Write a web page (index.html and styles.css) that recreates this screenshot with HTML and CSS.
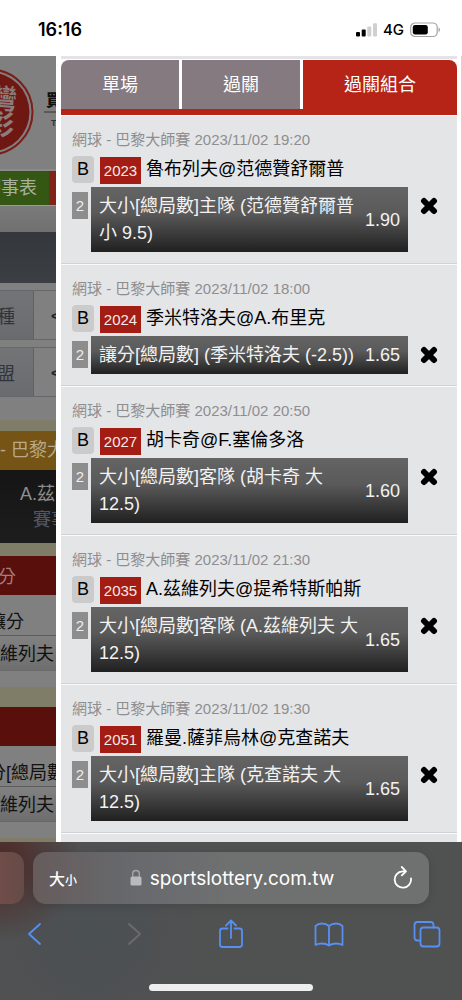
FILE: index.html
```html
<!DOCTYPE html>
<html lang="zh-Hant">
<head>
<meta charset="utf-8">
<meta name="viewport" content="width=device-width, initial-scale=1">
<title>過關組合</title>
<link rel="stylesheet" href="styles.css">
</head>
<body>
<div class="phone">
  <header class="status">
    <span class="time">16:16</span>
    <div class="signals">
      <svg class="bars" width="21" height="14" viewBox="0 0 21 14" aria-hidden="true">
        <rect x="0" y="9" width="4" height="4.5" rx="1"/><rect x="5.7" y="6.5" width="4" height="7" rx="1"/>
        <rect x="11.300" y="3.500" width="4" height="10" rx="1" fill="#d0d0d0"/><rect x="17" y="0.300" width="4" height="13.200" rx="1" fill="#d0d0d0"/>
      </svg>
      <span class="network">4G</span>
      <svg width="31" height="16" viewBox="0 0 31 16" aria-hidden="true">
        <rect x="0.700" y="1" width="26.500" height="13.500" rx="4.300" fill="none" stroke="#a4a4a4" stroke-width="1.200"/>
        <rect x="2.800" y="3" width="15" height="9.600" rx="2.300"/>
        <path d="M28.500 5.500v4.500q1.500-.6 1.500-2.250t-1.500-2.250z" fill="#a4a4a4"/>
      </svg>
    </div>
  </header>

  <main class="view">
    <div class="site">
      <div class="brand">
        <svg width="56" height="112" viewBox="0 0 56 112" role="img" aria-label="台灣運彩">
          <circle cx="-10" cy="56" r="42.500" fill="none" stroke="#7b1d18" stroke-width="2"/>
          <circle cx="-10" cy="56" r="39.500" fill="#6f1813"/>
          <g class="seal" transform="rotate(4 5 56)"><text x="-12" y="53">灣</text><text x="-13" y="79">彩</text></g>
          <text class="slogan" x="46" y="50">買</text>
          <path d="M44 56h12" stroke="#333"/>
          <text class="tag" x="51" y="70">T</text>
        </svg>
      </div>
      <nav class="menu"><a class="menu-green" href="#">賽事表</a><a class="menu-red" href="#" aria-label="投注"></a></nav>
      <div class="shade"></div>
      <div class="slate"></div>
      <div class="filter"><span>球種</span><button>&lt;</button></div>
      <div class="filter"><span>聯盟</span><button>&lt;</button></div>
      <div class="league">- 巴黎大</div>
      <div class="match"><span>A.茲</span><span class="info">賽事</span></div>
      <div class="market">讓分</div>
      <div class="option">讓分</div>
      <div class="player">維列夫</div>
      <div class="market market-next"></div>
      <div class="option option-wide">分[總局數]</div>
      <div class="player">維列夫</div>
      <div class="site-end"></div>
    </div>

    <section class="slip">
      <div class="slip-edge"></div>
      <div class="tabs" role="tablist">
        <button role="tab">單場</button>
        <button role="tab">過關</button>
        <button role="tab" class="active" aria-selected="true">過關組合</button>
      </div>
      <article class="bet">
        <p class="event">網球 - 巴黎大師賽 2023/11/02 19:20</p>
        <div class="teams"><span class="bank">B</span><span class="code">2023</span><span class="names">魯布列夫@范德贊舒爾普</span></div>
        <div class="pick"><span class="legs">2</span><div class="choice"><span class="label">大小[總局數]主隊 (范德贊舒爾普<br>小 9.5)</span><span class="odds">1.90</span></div>
        <button class="remove" aria-label="刪除"><svg width="18" height="18" viewBox="0 0 18 18"><path d="M4 4l10 10M14 4L4 14"/></svg></button></div>
      </article>
      <article class="bet">
        <p class="event">網球 - 巴黎大師賽 2023/11/02 18:00</p>
        <div class="teams"><span class="bank">B</span><span class="code">2024</span><span class="names">季米特洛夫@A.布里克</span></div>
        <div class="pick"><span class="legs">2</span><div class="choice"><span class="label">讓分[總局數] (季米特洛夫 (-2.5))</span><span class="odds">1.65</span></div>
        <button class="remove" aria-label="刪除"><svg width="18" height="18" viewBox="0 0 18 18"><path d="M4 4l10 10M14 4L4 14"/></svg></button></div>
      </article>
      <article class="bet">
        <p class="event">網球 - 巴黎大師賽 2023/11/02 20:50</p>
        <div class="teams"><span class="bank">B</span><span class="code">2027</span><span class="names">胡卡奇@F.塞倫多洛</span></div>
        <div class="pick"><span class="legs">2</span><div class="choice"><span class="label">大小[總局數]客隊 (胡卡奇 大<br>12.5)</span><span class="odds">1.60</span></div>
        <button class="remove" aria-label="刪除"><svg width="18" height="18" viewBox="0 0 18 18"><path d="M4 4l10 10M14 4L4 14"/></svg></button></div>
      </article>
      <article class="bet">
        <p class="event">網球 - 巴黎大師賽 2023/11/02 21:30</p>
        <div class="teams"><span class="bank">B</span><span class="code">2035</span><span class="names">A.茲維列夫@提希特斯帕斯</span></div>
        <div class="pick"><span class="legs">2</span><div class="choice"><span class="label">大小[總局數]客隊 (A.茲維列夫 大<br>12.5)</span><span class="odds">1.65</span></div>
        <button class="remove" aria-label="刪除"><svg width="18" height="18" viewBox="0 0 18 18"><path d="M4 4l10 10M14 4L4 14"/></svg></button></div>
      </article>
      <article class="bet">
        <p class="event">網球 - 巴黎大師賽 2023/11/02 19:30</p>
        <div class="teams"><span class="bank">B</span><span class="code">2051</span><span class="names">羅曼.薩菲烏林@克查諾夫</span></div>
        <div class="pick"><span class="legs">2</span><div class="choice"><span class="label">大小[總局數]主隊 (克查諾夫 大<br>12.5)</span><span class="odds">1.65</span></div>
        <button class="remove" aria-label="刪除"><svg width="18" height="18" viewBox="0 0 18 18"><path d="M4 4l10 10M14 4L4 14"/></svg></button></div>
      </article>
      <div class="slip-more"></div>
    </section>
  </main>

  <footer class="safari">
    <div class="address-row">
      <div class="prev-tab"></div>
      <div class="address">
        <button class="text-size" aria-label="文字大小">大<small>小</small></button>
        <button class="url">
          <svg width="12" height="18" viewBox="0 0 12 18" aria-hidden="true"><rect x="0.500" y="7.500" width="11" height="9" rx="1.500" fill="#b9b9be"/><path d="M2.700 8V5q0-3.500 3.300-3.500T9.300 5v3" fill="none" stroke="#a5a5aa" stroke-width="1.400"/></svg>
          sportslottery.com.tw
        </button>
        <button class="reload" aria-label="重新載入"><svg width="20" height="24" viewBox="0 0 20 24"><path d="M18 12.500A8.200 8.200 0 1 1 9.500 5.300H13M8.800 1L13 5.300L8.800 9.400"/></svg></button>
      </div>
    </div>
    <nav class="tools">
      <button aria-label="返回"><svg width="30" height="32" viewBox="0 0 30 32"><path d="M20 6L9 16L20 26"/></svg></button>
      <button aria-label="前進" disabled><svg width="30" height="32" viewBox="0 0 30 32"><path d="M11 6L22 16L11 26"/></svg></button>
      <button aria-label="分享"><svg width="30" height="32" viewBox="0 0 30 32"><path d="M11.500 10.500H6.500q-2.500 0-2.500 2.500V26.500q0 2.500 2.500 2.500h17q2.500 0 2.500-2.500V13q0-2.500-2.500-2.500h-5M15 20V2.500M10 7.500L15 2.500L20 7.500"/></svg></button>
      <button aria-label="書籤"><svg width="30" height="32" viewBox="0 0 30 32"><path d="M15 8Q12 5.500 8 5.500Q4 5.500 1.500 8V27Q4 25.500 8 25.500Q12 25.500 15 27.500Q18 25.500 22 25.500Q26 25.500 28.500 27V8Q26 5.500 22 5.500Q18 5.500 15 8V27.500"/></svg></button>
      <button aria-label="分頁"><svg width="30" height="32" viewBox="0 0 30 32"><rect x="8.500" y="9.500" width="19" height="19" rx="3"/><path d="M8.500 22.500H5.500q-3 0-3-3V7q0-3 3-3H18.500q3 0 3 3v2.500"/></svg></button>
    </nav>
    <div class="home"></div>
  </footer>
</div>
</body>
</html>
```
FILE: styles.css
```css
* { box-sizing: border-box; }
body {
  margin: 0;
  background: #fff;
  font-family: "Liberation Sans", "Noto Sans CJK TC", sans-serif;
  font-size: 18px;
  color: #000;
}
p { margin: 0; }
button {
  margin: 0;
  padding: 0;
  border: 0;
  background: none;
  color: inherit;
  font: inherit;
}
svg { display: block; flex: none; }
.phone {
  display: flex;
  flex-direction: column;
  min-height: 100vh;
}

.status {
  height: 56px;
  padding: 3px 21px 0 38px;
  display: flex;
  align-items: center;
  justify-content: space-between;
  font-family: Inter, "Liberation Sans", sans-serif;
}
.time { font-weight: 600; }
.signals { display: flex; align-items: center; gap: 6px; }
.network { font-size: 15px; font-weight: 500; }

.view {
  flex: 1 1 0;
  min-height: 0;
  display: grid;
  grid-template-columns: 56px 1fr;
  padding-right: 1px;
  background: #d6d6cf;
  overflow: hidden;
}

.site {
  overflow: hidden;
  background: #808080;
  color: #1c1c1c;
  white-space: nowrap;
}
.seal { font-size: 28px; font-weight: 700; fill: #8a7d7c; }
.slogan { font-size: 16px; font-weight: 900; fill: #111; }
.tag { font-size: 9px; font-weight: 700; fill: #333; }
.brand { height: 115px; border-bottom: 2px solid #8b8b8b; }
.menu { height: 35px; display: flex; border-bottom: 1px solid #999; }
.menu a { color: #a9b09f; text-decoration: none; line-height: 34px; }
.menu-green {
  width: 49px;
  padding-right: 12px;
  display: flex;
  justify-content: flex-end;
  background: #345713;
  overflow: hidden;
}
.menu-red { flex: 1; background: #81231b; }
.shade { height: 26px; background: linear-gradient(#7a7a7a, #707070); }
.slate { height: 51px; margin-bottom: 7px; background: linear-gradient(#34383c, #3b3e43); }
.filter {
  height: 50px;
  margin-bottom: 7px;
  display: flex;
  border: 1px solid #66676b;
  border-width: 1px 0;
  color: #33343a;
}
.filter span {
  width: 34px;
  padding-right: 18px;
  display: flex;
  justify-content: flex-end;
  align-items: center;
  background: linear-gradient(#737476, #696b6f);
  border-right: 1px solid #5f6165;
}
.filter button { flex: 1; padding-left: 17px; text-align: left; font-weight: 700; font-size: 15px; color: #222; }
.league {
  height: 50px;
  margin-top: 23px;
  border-top: 11px solid #7f7c68;
  line-height: 38px;
  background: #755415;
  color: #b8aa8b;
}
.match {
  height: 86px;
  padding: 11px 0 0 20px;
  border-bottom: 13px solid #7f7c68;
  background: linear-gradient(#151515, #1d1d1d);
  color: #8e8e8e;
  line-height: 26px;
}
.match span { display: block; }
.match .info { padding-left: 13px; color: #545865; }
.market {
  height: 39px;
  padding: 0 40px 2px 0;
  display: flex;
  justify-content: flex-end;
  align-items: center;
  background: #590f0b;
  color: #a37e7b;
}
.market-next { height: 59px; margin-top: 16px; border-top: 20px solid #7f7c68; }
.option {
  height: 41px;
  padding: 10px 32px 0 0;
  display: flex;
  justify-content: flex-end;
  align-items: center;
  border-bottom: 1px solid #5c5c5c;
  color: #111;
}
.option-wide { padding-right: 0; justify-content: flex-start; text-indent: -12px; }
.player {
  height: 35px;
  padding: 0 2px 2px 0;
  display: flex;
  justify-content: flex-end;
  align-items: center;
  border-bottom: 1px solid #696969;
  background: linear-gradient(#818181, #6e6e6e);
  color: #111;
}
.site-end { height: 24px; border-bottom: 8px solid #7f7c68; }

.slip {
  min-width: 0;
  border: solid #fff;
  border-width: 0 4px 0 5px;
  background: #fff;
}
.slip-edge { height: 3px; background: #e4e4e6; margin-bottom: 1px; }
.tabs {
  height: 55px;
  display: grid;
  grid-template-columns: 118fr 118fr 154fr;
  gap: 3px;
  border-bottom: 6px solid #b62418;
}
.tabs button { background: #857a80; color: #fff; padding-bottom: 3px; }
.tabs button:first-child { border-radius: 8px 0 0 0; }
.tabs .active { background: #b62418; border-radius: 0 8px 0 0; }
.bet {
  padding: 11px 17px 11px 11px;
  border-top: 1px solid #fafafa;
  border-bottom: 1px solid #d2d2d4;
  background: #e4e5e7;
}
.event { font-size: 15px; line-height: 26px; color: #8e8e90; white-space: nowrap; }
.teams { display: flex; align-items: flex-start; height: 34px; padding-top: 3px; white-space: nowrap; }
.bank {
  width: 22px;
  line-height: 27px;
  border-radius: 4px;
  background: #cbcbcc;
  text-align: center;
}
.code {
  width: 41px;
  margin: 1px 5px 0 6px;
  line-height: 27px;
  background: #a31d14;
  color: #f5e9e7;
  font-size: 15px;
  text-align: center;
}
.names { line-height: 26px; }
.pick { display: flex; align-items: flex-start; }
.legs {
  width: 16px;
  margin: 5px 3px 0 0;
  line-height: 27px;
  background: #8d8d8d;
  color: #eee;
  font-size: 15px;
  text-align: center;
}
.choice {
  flex: 1;
  padding: 6px 8px 5px;
  display: flex;
  align-items: center;
  justify-content: space-between;
  background: linear-gradient(#646464, #5a5a5a 40%, #202020);
  color: #f2f2f2;
  line-height: 27px;
  white-space: nowrap;
}
.remove { width: 18px; height: 18px; margin: 10px 2px 0 12px; }
.remove path { stroke: #000; stroke-width: 6; stroke-linecap: round; }
.slip-more { height: 9px; background: #e4e5e7; border-top: 1px solid #fafafa; }

.safari {
  height: 158px;
  overflow: hidden;
  padding-top: 10px;
  background:
    radial-gradient(circle at 0 20px, #4c2724 0, rgba(76, 39, 36, 0) 80px),
    radial-gradient(circle at 90px 90px, #4b5054 0, rgba(75, 80, 84, 0) 110px),
    #505151;
  color: #fff;
}
.address-row { display: flex; gap: 9px; padding-right: 33px; }
.prev-tab { width: 24px; height: 52px; border-radius: 0 13px 13px 0; background: linear-gradient(90deg, #704c47, #654c49); }
.address {
  flex: 1;
  height: 52px;
  padding: 0 16px;
  display: grid;
  grid-template-columns: 40px 1fr 20px;
  align-items: center;
  border-radius: 13px;
  background: linear-gradient(90deg, #665c5c, #67696d 25%, #6f7070 50%);
  box-shadow: 0 2px 10px rgba(0, 0, 0, 0.12);
}
.text-size { text-align: left; font-size: 16px; font-weight: 500; white-space: nowrap; }
.text-size small { font-size: 12px; }
.url {
  display: flex;
  align-items: center;
  justify-content: center;
  gap: 8px;
  padding-right: 18px;
  font-family: Inter, "Liberation Sans", sans-serif;
  font-size: 19px;
}
.reload path { fill: none; stroke: #fff; stroke-width: 1.800; stroke-linecap: round; stroke-linejoin: round; }
.tools {
  display: flex;
  justify-content: space-between;
  padding: 14px 20px 0;
}
.tools svg { fill: none; stroke: #5690f5; stroke-width: 1.800; stroke-linecap: round; stroke-linejoin: round; }
.tools button:disabled svg { stroke: #6b6c6c; }
.home { width: 164px; height: 7px; margin: 34px auto 0; border-radius: 4px; background: #eee; }
```
